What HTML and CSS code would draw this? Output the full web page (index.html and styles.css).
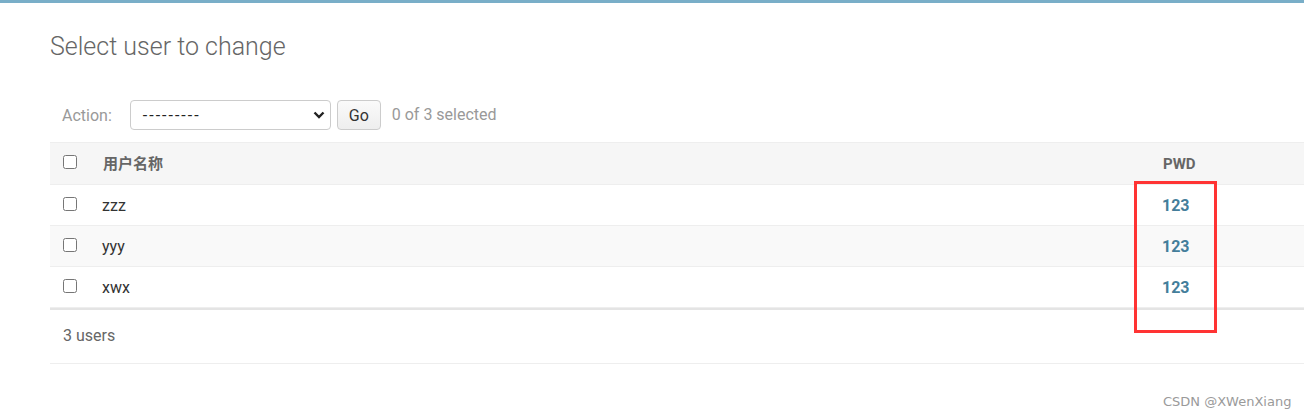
FILE: index.html
```html
<!DOCTYPE html>
<html lang="en">
<head>
<meta charset="utf-8">
<title>Select user to change</title>
<link rel="stylesheet" href="styles.css">
</head>
<body>
<div class="topbar"></div>
<div class="content">
  <h1 class="title">Select user to change</h1>
  <div class="actions">
    <label class="action-label">Action:</label>
    <div class="select">
      <span class="select-value">---------</span>
      <svg class="chevron" width="12" height="8" viewBox="0 0 12 8"><path d="M1.5 1.5 L6 6 L10.5 1.5" fill="none" stroke="#222" stroke-width="2.4"/></svg>
    </div>
    <button class="go">Go</button>
    <span class="counter">0 of 3 selected</span>
  </div>
  <table class="results">
    <colgroup>
      <col class="w-check">
      <col class="w-name">
      <col class="w-pwd">
    </colgroup>
    <thead>
      <tr>
        <th class="col-check"><input type="checkbox" class="cb"></th>
        <th class="col-name">用户名称</th>
        <th class="col-pwd">PWD</th>
      </tr>
    </thead>
    <tbody>
      <tr>
        <td class="col-check"><input type="checkbox" class="cb"></td>
        <td class="col-name">zzz</td>
        <td class="col-pwd"><a class="pwd-link">123</a></td>
      </tr>
      <tr class="alt">
        <td class="col-check"><input type="checkbox" class="cb"></td>
        <td class="col-name">yyy</td>
        <td class="col-pwd"><a class="pwd-link">123</a></td>
      </tr>
      <tr>
        <td class="col-check"><input type="checkbox" class="cb"></td>
        <td class="col-name">xwx</td>
        <td class="col-pwd"><a class="pwd-link">123</a></td>
      </tr>
    </tbody>
  </table>
  <p class="paginator">3 users</p>
</div>
<div class="highlight"></div>
<div class="watermark">CSDN @XWenXiang</div>
</body>
</html>
```
FILE: styles.css
```css
html, body {
  margin: 0;
  padding: 0;
  background: #fff;
}
body {
  font-family: Roboto, "Liberation Sans", "Noto Sans CJK SC", sans-serif;
  color: #333;
  width: 1304px;
  height: 418px;
  overflow: hidden;
  position: relative;
}
.topbar {
  height: 3px;
  background: #79aec8;
}
.content {
  padding-left: 50px;
}
.title {
  margin: 29px 0 0;
  font-size: 25px;
  line-height: 30px;
  font-weight: 300;
  color: #666;
}
.actions {
  margin-top: 38px;
  height: 30px;
  display: flex;
  align-items: center;
  padding-left: 12px;
  font-size: 16px;
}
.action-label {
  color: #999;
  margin-right: 18px;
}
.select {
  box-sizing: border-box;
  width: 201px;
  height: 30px;
  border: 1px solid #ccc;
  border-radius: 4px;
  display: flex;
  align-items: center;
  justify-content: space-between;
  padding: 0 5px 0 12px;
  color: #222;
  font-size: 16px;
}
.select-value {
  letter-spacing: 2px;
}
.go {
  box-sizing: border-box;
  margin-left: 6px;
  width: 44px;
  height: 30px;
  border: 1px solid #ccc;
  border-radius: 4px;
  background: linear-gradient(#fafafa, #eeeeee);
  font-family: Roboto, "Liberation Sans", sans-serif;
  font-size: 16px;
  color: #333;
  padding: 0;
}
.counter {
  margin-left: 11px;
  color: #999;
  margin-top: -2px;
}
.results {
  margin-top: 12px;
  width: 1254px;
  border-collapse: separate;
  border-spacing: 0;
  table-layout: fixed;
}
.w-check { width: 40px; }
.w-name { width: 1060px; }
.w-pwd { width: 154px; }
.results th {
  background: #f6f6f6;
  border-top: 1px solid #eee;
  border-bottom: 1px solid #eee;
  line-height: 39px;
  height: 41px;
  padding: 2px 0 0;
  box-sizing: border-box;
  text-align: left;
  font-size: 15px;
  font-weight: 700;
  color: #666;
  font-family: Roboto, "Noto Sans CJK SC", sans-serif;
}
.results td {
  border-bottom: 1px solid #eee;
  line-height: 38px;
  height: 38px;
  padding: 2px 0 0;
  font-size: 16px;
  color: #333;
  vertical-align: middle;
}
.results tr.alt td {
  background: #f9f9f9;
}
.results .col-check {
  padding-left: 13px;
}
.results .col-name {
  padding-left: 12px;
}
.results th.col-name {
  padding-left: 13px;
}
.results .col-pwd {
  padding-left: 12px;
}
.results th.col-pwd {
  padding-left: 13px;
}
.cb {
  width: 14px;
  height: 14px;
  margin: 0;
  vertical-align: middle;
  position: relative;
  top: -3px;
}
.pwd-link {
  color: #447e9b;
  font-weight: 700;
  text-decoration: none;
}
.paginator {
  margin: 0;
  border-top: 2px solid #e4e4e4;
  border-bottom: 1px solid #eee;
  padding: 15px 13px 16px;
  line-height: 22px;
  font-size: 16px;
  color: #666;
}
.highlight {
  position: absolute;
  left: 1134px;
  top: 181px;
  width: 83px;
  height: 152px;
  box-sizing: border-box;
  border: 3px solid #f33;
}
.watermark {
  position: absolute;
  left: 1163px;
  top: 394px;
  font-family: "DejaVu Sans", sans-serif;
  font-size: 13px;
  color: #9a9a9a;
  white-space: nowrap;
}
```
